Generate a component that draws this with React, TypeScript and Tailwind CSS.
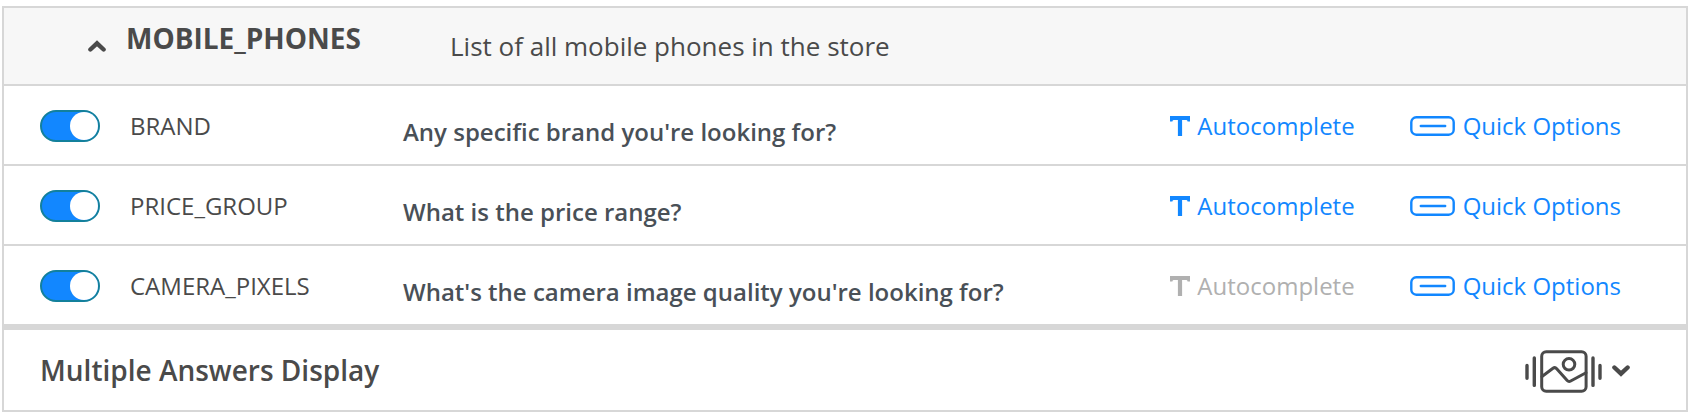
import React, { useState } from 'react';

interface Attribute {
    name: string;
    question: string;
    autocomplete: boolean;
    quickOptions: boolean;
}

const attributes: Attribute[] = [
    { name: 'BRAND', question: "Any specific brand you're looking for?", autocomplete: true, quickOptions: true },
    { name: 'PRICE_GROUP', question: 'What is the price range?', autocomplete: true, quickOptions: true },
    { name: 'CAMERA_PIXELS', question: "What's the camera image quality you're looking for?", autocomplete: false, quickOptions: true },
];

function Chevron({ up = false }: { up?: boolean }) {
    return (
        <svg viewBox="0 0 18 12" className="h-3 w-[18px]" fill="none" stroke="currentColor" strokeWidth="4.4" strokeLinecap="round" aria-hidden="true">
            <path d={up ? 'M2.4 9.5 9 3.3l6.6 6.2' : 'M2.4 2.5 9 8.7l6.6-6.2'} />
        </svg>
    );
}

function TextIcon() {
    return (
        <svg viewBox="0 0 20 20" className="size-5" fill="currentColor" aria-hidden="true">
            <path d="M0 0h20v5.4h-2.4a1.5 1.5 0 0 0-1.5-1.3h-4V20H7.9V4.1h-4a1.5 1.5 0 0 0-1.5 1.3H0z" />
        </svg>
    );
}

function PillIcon() {
    return (
        <svg viewBox="0 0 45 20" className="h-5 w-[45px]" fill="none" stroke="currentColor" strokeWidth="2.4" strokeLinecap="round" aria-hidden="true">
            <rect x="1.3" y="1.3" width="42.4" height="17.4" rx="5" />
            <path d="M10.8 10h24.4" />
        </svg>
    );
}

function GalleryIcon() {
    return (
        <svg viewBox="0 0 77 43" className="h-[43px] w-[77px]" fill="none" stroke="currentColor" strokeWidth="3" strokeLinecap="round" aria-hidden="true">
            <rect x="16.7" y="1.7" width="44.4" height="39.6" rx="4.5" />
            <circle cx="44" cy="14.3" r="5.8" />
            <path d="M17 26.5 28 18.3q2-1.5 3.7.4l10.5 11.8q1.5 1.6 3.5.5L61 22.8" />
            <path d="M2 15.4v12.8M9.3 8v27.4M68 8v27.4M75 15.4v12.8" strokeWidth="3.4" />
        </svg>
    );
}

function AttributeRow({ name, question, autocomplete, quickOptions }: Attribute) {
    const [enabled, setEnabled] = useState(true);
    const [auto, setAuto] = useState(autocomplete);
    const [quick, setQuick] = useState(quickOptions);

    return (
        <li className="flex h-20 items-center border-b-2 border-[#d7d7d7] pt-0.5 pr-[65px] pl-9 last:h-[78px] last:border-b-0">
            <label className="flex w-[363px] shrink-0 items-center gap-[30px]">
                <input
                    type="checkbox"
                    role="switch"
                    checked={enabled}
                    onChange={(e) => setEnabled(e.target.checked)}
                    className="flex h-8 w-[60px] shrink-0 appearance-none rounded-full border-2 border-[#13809c] bg-gray-300 before:size-7 before:rounded-full before:bg-white checked:justify-end checked:bg-[#1287ff]"
                />
                <span>{name}</span>
            </label>
            <p className="flex-1 pt-3 font-semibold text-[#495057]">{question}</p>
            <div className="flex shrink-0 items-center gap-[55px]">
                <button type="button" aria-pressed={auto} onClick={() => setAuto(!auto)} className={`flex items-center gap-[7px] ${auto ? 'text-[#1287ff]' : 'text-[#b0b0b0]'}`}>
                    <TextIcon />
                    Autocomplete
                </button>
                <button type="button" aria-pressed={quick} onClick={() => setQuick(!quick)} className={`flex items-center gap-2 ${quick ? 'text-[#1287ff]' : 'text-[#b0b0b0]'}`}>
                    <PillIcon />
                    Quick Options
                </button>
            </div>
        </li>
    );
}

export default function App() {
    const [open, setOpen] = useState(true);

    return (
        <main className="bg-white pt-1.5 pr-1 pb-0.5 pl-0.5 font-['Open_Sans',sans-serif] text-[24px] leading-8 text-[#4a4a4a]">
            <section className="border-2 border-[#d7d7d7]">
                <header className="flex h-[78px] items-center border-b-2 border-[#d7d7d7] bg-[#f7f7f7] pl-[84px]">
                    <div className="flex w-[362px] shrink-0 items-center gap-5">
                        <button type="button" aria-label="Toggle attributes" aria-expanded={open} onClick={() => setOpen(!open)}>
                            <Chevron up={open} />
                        </button>
                        <h2 className="pb-4 text-[28px] font-bold">MOBILE_PHONES</h2>
                    </div>
                    <p className="text-[26px]">List of all mobile phones in the store</p>
                </header>

                {open && (
                    <ul>
                        {attributes.map((attribute) => (
                            <AttributeRow key={attribute.name} {...attribute} />
                        ))}
                    </ul>
                )}

                <footer className="flex h-[86px] items-center justify-between border-t-[6px] border-[#d7d7d7] pr-14 pl-9">
                    <h3 className="text-[28px] font-semibold">Multiple Answers Display</h3>
                    <button type="button" aria-label="Choose answers display" className="flex items-center gap-2.5 pt-0.5">
                        <GalleryIcon />
                        <Chevron />
                    </button>
                </footer>
            </section>
        </main>
    );
}
